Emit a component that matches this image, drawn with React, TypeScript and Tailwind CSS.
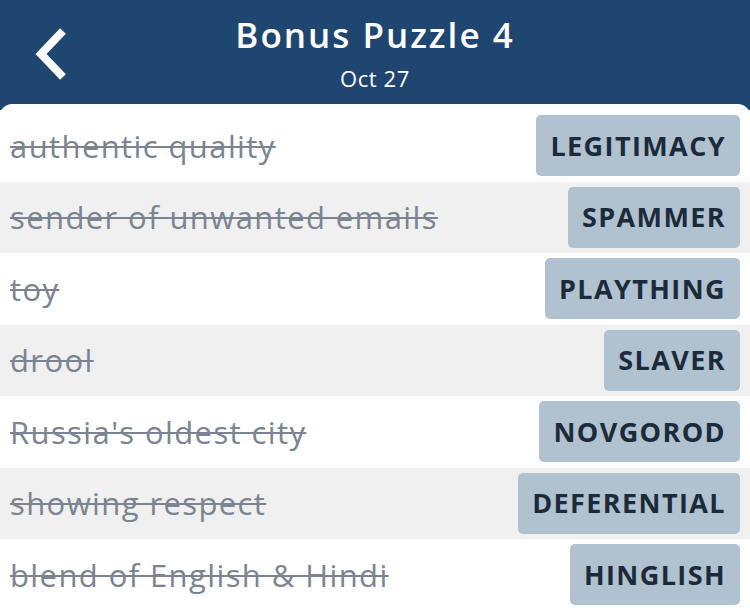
import React from "react";

const rows: [string, string][] = [
  ["authentic quality", "LEGITIMACY"],
  ["sender of unwanted emails", "SPAMMER"],
  ["toy", "PLAYTHING"],
  ["drool", "SLAVER"],
  ["Russia's oldest city", "NOVGOROD"],
  ["showing respect", "DEFERENTIAL"],
  ["blend of English & Hindi", "HINGLISH"],
];

export default function App() {
  return (
    <div className="w-[750px] h-[613px] overflow-hidden bg-[#1f4571]" style={{ fontFamily: "'Open Sans', Lato, sans-serif" }}>
      <div className="relative h-[104px] flex flex-col items-center text-white">
        <div className="absolute left-[33px] top-[26px]">
          <svg width="38" height="56" viewBox="0 0 38 56">
            <path d="M30 5 L8 28 L30 51" fill="none" stroke="white" strokeWidth="8" strokeLinecap="butt" strokeLinejoin="miter" />
          </svg>
        </div>
        <div className="mt-[12px] text-[35px] font-semibold leading-[46px] tracking-[2px]">Bonus Puzzle 4</div>
        <div className="text-[22px] leading-[28px] mt-[6px] tracking-[0.6px]">Oct 27</div>
      </div>
      <div className="bg-white rounded-t-[12px] pt-[6px] h-[509px]">
        {rows.map(([clue, ans], i) => (
          <div key={i} className={`h-[71.5px] flex items-center justify-between pl-[10px] pr-[10px] ${i % 2 === 1 ? "bg-[#f0f0f0]" : "bg-white"}`}>
            <span className="text-[31px] tracking-[1.4px] text-[#7b8490] line-through decoration-[2px]">{clue}</span>
            <span className="h-[61px] flex items-center px-[14px] rounded-[5px] bg-[#b0c1cf] text-[#1c2b3b] text-[27px] font-bold tracking-[1.4px]">{ans}</span>
          </div>
        ))}
      </div>
    </div>
  );
}
